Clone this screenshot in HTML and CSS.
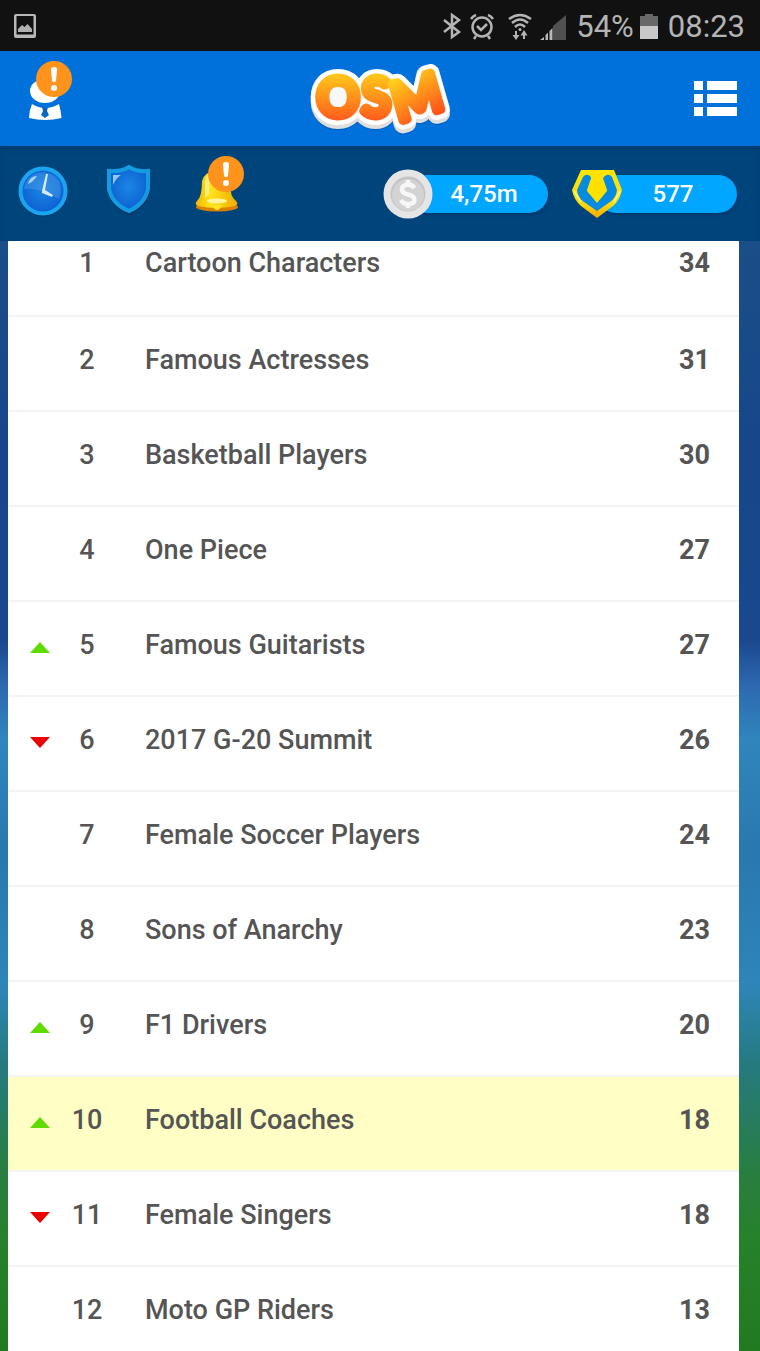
FILE: index.html
```
<!DOCTYPE html>
<html lang="en">
<head>
<meta charset="utf-8">
<meta name="viewport" content="width=device-width, initial-scale=1">
<title>OSM – Ranking</title>
<link rel="stylesheet" href="styles.css">
</head>
<body>
<svg class="defs" width="0" height="0" aria-hidden="true">
  <defs>
    <linearGradient id="logoFill" gradientUnits="userSpaceOnUse" x1="0" y1="14" x2="0" y2="68"><stop offset="0" stop-color="#ffd21a"/><stop offset="1" stop-color="#ff531c"/></linearGradient>
    <linearGradient id="logoFillTilted" gradientUnits="userSpaceOnUse" x1="-12" y1="-44" x2="2" y2="6"><stop offset="0" stop-color="#ffd21a"/><stop offset="1" stop-color="#ff531c"/></linearGradient>
    <radialGradient id="blueFace" cx=".5" cy=".45" r=".6"><stop offset="0" stop-color="#1c86e4"/><stop offset="1" stop-color="#0a5cd0"/></radialGradient>
    <linearGradient id="gold" x1="0" y1="0" x2="0" y2="1"><stop offset="0" stop-color="#ffe600"/><stop offset=".7" stop-color="#ffdc0a"/><stop offset="1" stop-color="#f5a800"/></linearGradient>
    <linearGradient id="bell" x1="0" y1="0" x2="1" y2="0"><stop offset="0" stop-color="#f6b400"/><stop offset=".35" stop-color="#ffe31c"/><stop offset="1" stop-color="#f2ac00"/></linearGradient>
    <g id="letters-os"><text x="33" y="60" text-anchor="middle">O</text><text x="71" y="60" text-anchor="middle">S</text></g>
    <text id="letter-m" class="logo-m" transform="translate(117 59) rotate(-16)" text-anchor="middle">M</text>
    <g id="word"><use href="#letters-os"/><use href="#letter-m"/></g>
    <g id="badge"><circle cx="41" cy="20" r="18" fill="#ff931c"/><path d="M41 8c2.300 0 3.200 1 3 3l-1 10.500c-.2 2-3.800 2-4 0L38 11c-.2-2 .7-3 3-3z" fill="#fff"/><circle cx="41" cy="29" r="3" fill="#fff"/></g>
    <symbol id="up" viewBox="0 0 20 11"><path d="M10 0L20 11H0z" fill="#5edc00"/></symbol>
    <symbol id="down" viewBox="0 0 20 11"><path d="M0 0H20L10 11z" fill="#eb0000"/></symbol>
  </defs>
</svg>

<div class="status">
  <svg width="24" height="26" viewBox="0 0 24 26" aria-hidden="true"><path fill-rule="evenodd" fill="#b8b8b8" d="M3 1H21Q23 1 23 3V23Q23 25 21 25H3Q1 25 1 23V3Q1 1 3 1zM3.500 3V21.500H20.500V3z"/><path d="M5 19V16L9 12L11.500 14L14.500 11L19 16V19z" fill="#b0b0b0"/></svg>
  <div class="status-right">
    <svg class="status-icons" width="126" height="30" viewBox="0 0 126 30" fill="none" stroke="#b4b4b4" aria-hidden="true">
      <path d="M2 9L17 21L10 26V4L17 9L2 21" stroke-width="2.500"/>
      <circle cx="40" cy="16" r="9.500" stroke-width="2.500"/><path d="M35 15L39 19L45 13M34 25L32 28M46 25L48 28M29 8Q31 5 34 4M46 4Q49 5 51 8" stroke-width="2.500"/>
      <path d="M67 8Q78 0 89 8M70 12Q78 5 86 12M73 16Q78 11 83 16" stroke-width="2.500"/><circle cx="78" cy="18.500" r="1.500" fill="#b4b4b4" stroke="none"/><path d="M74 20V26M82 28V22" stroke-width="2"/><path d="M70.500 24H77.500L74 29zM78.500 24.500H85.500L82 19z" fill="#b4b4b4" stroke="none"/>
      <path d="M111 29V15L124 4V29z" fill="#505050" stroke="none"/><path d="M98 29L102 26V29zM103.500 29V24L106 21.500V29zM107.500 20L110.500 17V29H107.500z" fill="#b8b8b8" stroke="none"/>
    </svg>
    <span>54%</span>
    <svg class="battery" width="18" height="26" viewBox="0 0 18 26" aria-hidden="true"><path d="M0 3H5V1H13V3H18V13H0z" fill="#686868"/><path d="M0 13H18V26H0z" fill="#c8c8c8"/></svg>
    <span>08:23</span>
  </div>
</div>

<header class="topbar">
  <button class="icon-btn" aria-label="Manager profile">
    <svg width="60" height="80" viewBox="0 0 60 80"><ellipse cx="32" cy="32" rx="15" ry="12" fill="#fff"/><path d="M19 45Q32 53 46 45Q48 52 48.500 59Q32 63 16 59Q16 52 19 45z" fill="#fff"/><path d="M29 48H35L34 52L36 56L32 59L28 56L30 52z" fill="#0868c4"/><use href="#badge"/></svg>
  </button>
  <svg class="logo" width="150" height="85" viewBox="0 0 150 85" role="img" aria-label="OSM">
    <use href="#word" y="6" fill="#00377a" stroke="#00377a" stroke-width="17" opacity=".2"/>
    <use href="#word" y="4" fill="#dedede" stroke="#dedede" stroke-width="18"/>
    <use href="#word" fill="#fff" stroke="#fff" stroke-width="18"/>
    <ellipse cx="33" cy="42" rx="12" ry="14" fill="#f8f8f8"/>
    <use href="#letters-os" fill="url(#logoFill)" stroke="url(#logoFill)" stroke-width="9"/>
    <use href="#letter-m" fill="url(#logoFillTilted)" stroke="url(#logoFillTilted)" stroke-width="9"/>
  </svg>
  <button class="icon-btn menu" aria-label="Menu">
    <svg width="43" height="35" viewBox="0 0 43 35" fill="#fff"><path d="M0 0H9V9H0zM13 0H43V9H13zM0 13H9V22H0zM13 13H43V22H13zM0 26H9V35H0zM13 26H43V35H13z"/></svg>
  </button>
</header>

<nav class="resources">
  <div class="tools">
    <button class="icon-btn" aria-label="Timers">
      <svg width="60" height="80" viewBox="0 0 60 80"><circle cx="30" cy="39" r="24" fill="#003462" opacity=".5"/><circle cx="30" cy="37" r="22.500" fill="url(#blueFace)" stroke="#1ba5ee" stroke-width="4"/><path d="M11 35A19 19 0 0 1 47 29Q49 38 46 45Q28 33 11 35z" fill="#5fa9ee" opacity=".35"/><path d="M15 30Q17 22 24 22Q21 27 15 30z" fill="#cbe5fc" opacity=".8"/><path d="M29 37L33 20H35L32 36L40 41L39 43L29 39z" fill="#d4eaff"/></svg>
    </button>
    <button class="icon-btn" aria-label="Shield">
      <svg width="60" height="80" viewBox="0 0 60 80"><path d="M30 14Q39 20 51 18V38Q48 54 30 62Q12 54 9 38V18Q21 20 30 14z" fill="#00305c" opacity=".5"/><path d="M30 13Q38 18 49 17V35Q46 50 30 57Q13 50 10 35V17Q22 18 30 13z" fill="url(#blueFace)" stroke="#159be0" stroke-width="4"/><path d="M14 21L22 21Q17 24 14 31z" fill="#b6dcf8" opacity=".8"/></svg>
    </button>
    <button class="icon-btn" aria-label="Notifications">
      <svg width="60" height="80" viewBox="0 0 60 80"><ellipse cx="32" cy="53" rx="21" ry="4.500" fill="#d98200"/><path d="M17 27Q20 17 31 17Q43 18 45 29Q45 43 51 47Q54 50 50 52Q31 56 13 52Q9 50 12 47Q17 43 17 27z" fill="url(#bell)"/><path d="M20 27Q21 21 25 20L24 40L20 44z" fill="#fff6a0" opacity=".75"/><ellipse cx="32" cy="47" rx="10" ry="2.500" fill="#fff5a0"/><path d="M27 51H37Q35 56 32 56Q29 56 27 51z" fill="#ffe420"/><use href="#badge"/></svg>
    </button>
  </div>
  <div class="wallet">
    <div class="currency">
      <svg width="50" height="50" viewBox="0 0 50 50" aria-hidden="true"><circle cx="25" cy="25" r="24.500" fill="#e5e5e5"/><circle cx="25" cy="25" r="17.500" fill="#c4c4c4"/><circle cx="25" cy="26" r="16" fill="#d3d3d3"/><path d="M31.500 19Q29 15.500 25 15.500Q19 16 19 20.500Q19 24 25 25.500Q31.500 27 31.500 31Q31 35 25 35Q20 35 18 31M25 11V16M25 35V39" fill="none" stroke="#f7f7f7" stroke-width="4.500"/></svg>
      <span class="amount">4,75m</span>
    </div>
    <div class="currency">
      <svg width="50" height="50" viewBox="0 0 50 50" aria-hidden="true"><path d="M9 1H42L50 21Q48 31 41 37L25 49L9 37Q2 31 0 21z" fill="url(#gold)"/><path d="M11 8Q14 4 18 7Q20 9 18 12L15 21L25 33L35 21L32 12Q30 9 33 7Q37 4 40 8L45 21Q44 29 38 33L25 42L12 33Q6 29 5 21z" fill="#078be0"/><path d="M20 2H31V13L35 22L25 34L15 22L19 13z" fill="#ffe100"/><path d="M2 22L9 33M48 22L42 33" stroke="#fff27a" stroke-width="2"/></svg>
      <span class="amount">577</span>
    </div>
  </div>
</nav>

<main class="stadium">
  <table class="ranking">
    <tbody>
      <tr><td class="trend"></td><td class="rank">1</td><td class="name">Cartoon Characters</td><td class="score">34</td></tr>
      <tr><td class="trend"></td><td class="rank">2</td><td class="name">Famous Actresses</td><td class="score">31</td></tr>
      <tr><td class="trend"></td><td class="rank">3</td><td class="name">Basketball Players</td><td class="score">30</td></tr>
      <tr><td class="trend"></td><td class="rank">4</td><td class="name">One Piece</td><td class="score">27</td></tr>
      <tr><td class="trend"><svg role="img" aria-label="Up"><use href="#up"/></svg></td><td class="rank">5</td><td class="name">Famous Guitarists</td><td class="score">27</td></tr>
      <tr><td class="trend"><svg role="img" aria-label="Down"><use href="#down"/></svg></td><td class="rank">6</td><td class="name">2017 G-20 Summit</td><td class="score">26</td></tr>
      <tr><td class="trend"></td><td class="rank">7</td><td class="name">Female Soccer Players</td><td class="score">24</td></tr>
      <tr><td class="trend"></td><td class="rank">8</td><td class="name">Sons of Anarchy</td><td class="score">23</td></tr>
      <tr><td class="trend"><svg role="img" aria-label="Up"><use href="#up"/></svg></td><td class="rank">9</td><td class="name">F1 Drivers</td><td class="score">20</td></tr>
      <tr class="current"><td class="trend"><svg role="img" aria-label="Up"><use href="#up"/></svg></td><td class="rank">10</td><td class="name">Football Coaches</td><td class="score">18</td></tr>
      <tr><td class="trend"><svg role="img" aria-label="Down"><use href="#down"/></svg></td><td class="rank">11</td><td class="name">Female Singers</td><td class="score">18</td></tr>
      <tr><td class="trend"></td><td class="rank">12</td><td class="name">Moto GP Riders</td><td class="score">13</td></tr>
    </tbody>
  </table>
</main>
</body>
</html>
```
FILE: styles.css
```
* { box-sizing: border-box; }

body {
  margin: 0;
  height: 100vh;
  display: flex;
  flex-direction: column;
  overflow: hidden;
  font-family: Roboto, "Liberation Sans", sans-serif;
  color: #555;
}

svg { display: block; flex: none; }
.defs { position: absolute; }

.status {
  flex: none;
  display: flex;
  align-items: center;
  justify-content: space-between;
  height: 51px;
  padding: 0 15px 0 13px;
  background: #111;
  color: #b4b4b4;
  font-size: 31px;
  line-height: 36px;
}
.status-right { display: flex; align-items: center; gap: 6px; }
.status-right span { padding-top: 2px; }
.status-icons { margin-right: 2px; }
.battery { margin-right: 4px; }

.topbar {
  flex: none;
  display: grid;
  grid-template-columns: 1fr auto 1fr;
  align-items: center;
  height: 95px;
  padding: 0 23px 0 13px;
  background: #0070da;
}
.icon-btn {
  display: block;
  padding: 0;
  border: 0;
  background: none;
  cursor: pointer;
  justify-self: start;
}
.menu { justify-self: end; }
.logo {
  overflow: visible;
  margin-left: 10px;
  font-family: Lato, sans-serif;
  font-size: 52px;
  font-weight: 400;
  stroke-linejoin: round;
}
.logo-m { font-size: 53px; }

.resources {
  flex: none;
  display: flex;
  align-items: center;
  justify-content: space-between;
  height: 95px;
  padding: 0 23px 0 13px;
  background: #00447c;
  box-shadow: inset 0 4px 6px -3px #00366a;
}
.tools { display: flex; gap: 26px; }
.wallet { display: flex; gap: 24px; }
.currency { display: flex; align-items: center; }
.currency svg { position: relative; z-index: 1; }
.amount {
  width: 140px;
  margin-left: -25px;
  padding-left: 12px;
  border-radius: 19px;
  background: #00a6ff;
  box-shadow: 1px 2px 3px #00386c;
  color: #fff;
  font-size: 24px;
  font-weight: 500;
  line-height: 38px;
  text-align: center;
}

.stadium {
  flex: 1;
  min-height: 0;
  overflow: hidden;
  padding: 0 21px 0 8px;
  background: linear-gradient(#1a4e88 0%, #17468a 20%, #1a488e 36%, #2d68b0 40%, #2f86bc 45%, #2978ae 55%, #2d86b8 67%, #257a80 74%, #287e40 84%, #26822a 90%, #207a20 100%);
}

.ranking {
  width: 100%;
  border-collapse: separate;
  border-spacing: 0;
  background: #fff;
  font-size: 27px;
  font-weight: 500;
  line-height: 32px;
}
.ranking td {
  height: 95px;
  padding: 27px 0 0;
  border-bottom: 2px solid #f4f4f4;
  vertical-align: top;
}
.ranking tr:first-child td { height: 76px; padding-top: 6px; }
.ranking .current td { background: #ffffc5; }
.ranking .trend { width: 54px; padding-left: 22px; }
.trend svg { width: 20px; height: 11px; margin-top: 13px; }
.ranking .rank { width: 50px; text-align: center; }
.ranking .name { padding-left: 33px; }
.ranking .score {
  width: 100px;
  padding-right: 29px;
  text-align: right;
  font-weight: 700;
}
```
